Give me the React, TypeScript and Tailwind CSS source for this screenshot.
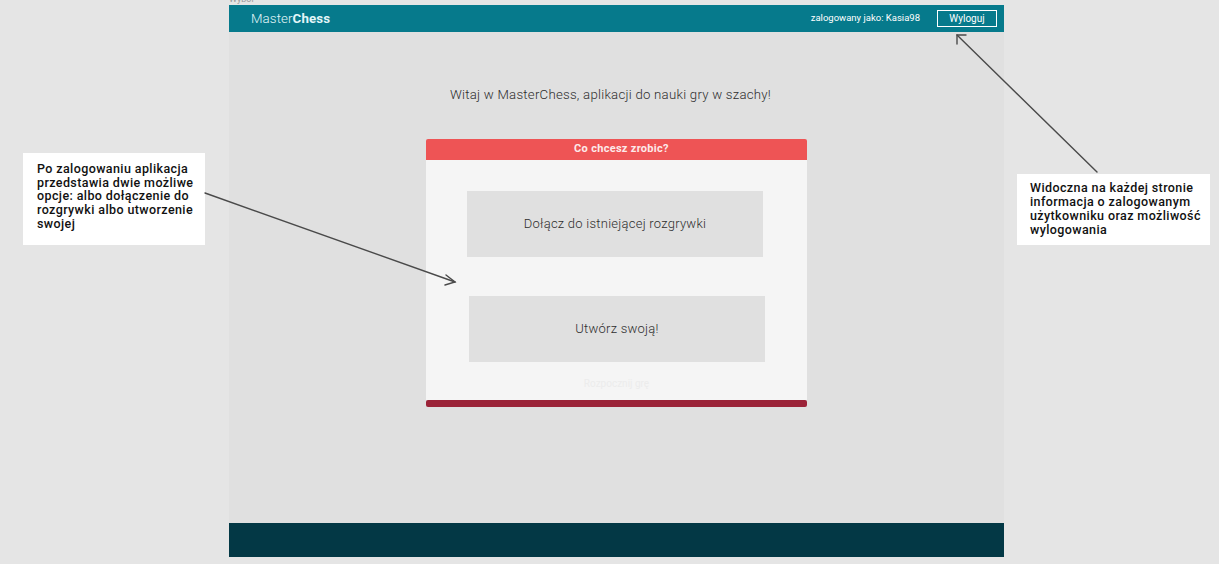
import React from 'react';

const font = { fontFamily: 'Roboto, "Noto Sans", sans-serif' };

function Arrows() {
  return (
    <svg className="absolute inset-0 pointer-events-none" width={1219} height={564}>
      <g stroke="#4a4a4a" strokeWidth={1.4} fill="none" strokeLinecap="round">
        <line x1={205} y1={193} x2={455} y2={282} />
        <polyline points="446,275 455,282 445,285" />
        <line x1={1097} y1={172} x2={957} y2={35} />
        <polyline points="957,44 957,35 966,35" />
      </g>
    </svg>
  );
}

export default function App() {
  return (
    <div className="relative w-[1219px] h-[564px] bg-[#e5e5e5] overflow-hidden" style={font}>
      <div className="h-[5px] overflow-hidden pl-[229px]">
        <div className="-mt-[7px] text-[9px] text-[#9a9a9a]">Wybór</div>
      </div>

      <div className="ml-[229px] w-[775px] h-[552px] bg-[#e0e0e0] flex flex-col">
        <header className="h-[27px] bg-[#067a8c] flex items-center justify-between pl-[22px] pr-[7px]">
          <div className="text-[13.3px] text-[#e3f6f8] font-light tracking-[0.1px]">
            Master<span className="font-bold">Chess</span>
          </div>
          <div className="flex items-center gap-[17px]">
            <span className="text-[9.5px] text-white">zalogowany jako: Kasia98</span>
            <button className="w-[60px] h-[17px] border border-white text-white text-[10px] leading-none flex items-center justify-center">
              Wyloguj
            </button>
          </div>
        </header>

        <div className="flex-1 flex flex-col items-center">
          <p className="mt-[53px] mr-[12px] text-[13.2px] leading-[19px] font-light text-[#2e2e2e] tracking-[0.25px]">
            Witaj w MasterChess, aplikacji do nauki gry w szachy!
          </p>

          <div className="mt-[35px] w-[381px] flex flex-col">
            <div className="h-[21px] bg-[#ee5455] rounded-t-[2px] flex items-center justify-center pl-[10px] text-[11px] font-bold text-[#fdeaea] tracking-[0.3px]">
              Co chcesz zrobic?
            </div>
            <div className="h-[240px] bg-[#f5f5f5] flex flex-col pt-[31px]">
              <button className="ml-[41px] w-[296px] h-[66px] bg-[#e0e0e0] text-[13px] font-light text-[#2e2e2e] tracking-[0.25px]">
                Dołącz do istniejącej rozgrywki
              </button>
              <button className="ml-[43px] mt-[39px] w-[296px] h-[66px] bg-[#e0e0e0] text-[13px] font-light text-[#2e2e2e] tracking-[0.25px]">
                Utwórz swoją!
              </button>
              <div className="mt-[14px] text-center text-[10px] text-[#ececec]">Rozpocznij grę</div>
            </div>
            <div className="h-[7px] bg-[#9b2338] rounded-[2px]" />
          </div>
        </div>

        <footer className="h-[34px] bg-[#033845]" />
      </div>

      <div className="absolute left-[23px] top-[153px] w-[182px] h-[92px] bg-white pl-[14px] pt-[9px] text-[12.5px] leading-[13.7px] font-medium tracking-[0.4px] text-[#111]">
        Po zalogowaniu aplikacja
        <br />
        przedstawia dwie możliwe
        <br />
        opcje: albo dołączenie do
        <br />
        rozgrywki albo utworzenie
        <br />
        swojej
      </div>

      <div className="absolute left-[1017px] top-[174px] w-[193px] h-[71px] bg-white pl-[13px] pt-[7px] text-[12.5px] leading-[14px] font-medium tracking-[0.4px] text-[#111]">
        Widoczna na każdej stronie
        <br />
        informacja o zalogowanym
        <br />
        użytkowniku oraz możliwość
        <br />
        wylogowania
      </div>

      <Arrows />
    </div>
  );
}
